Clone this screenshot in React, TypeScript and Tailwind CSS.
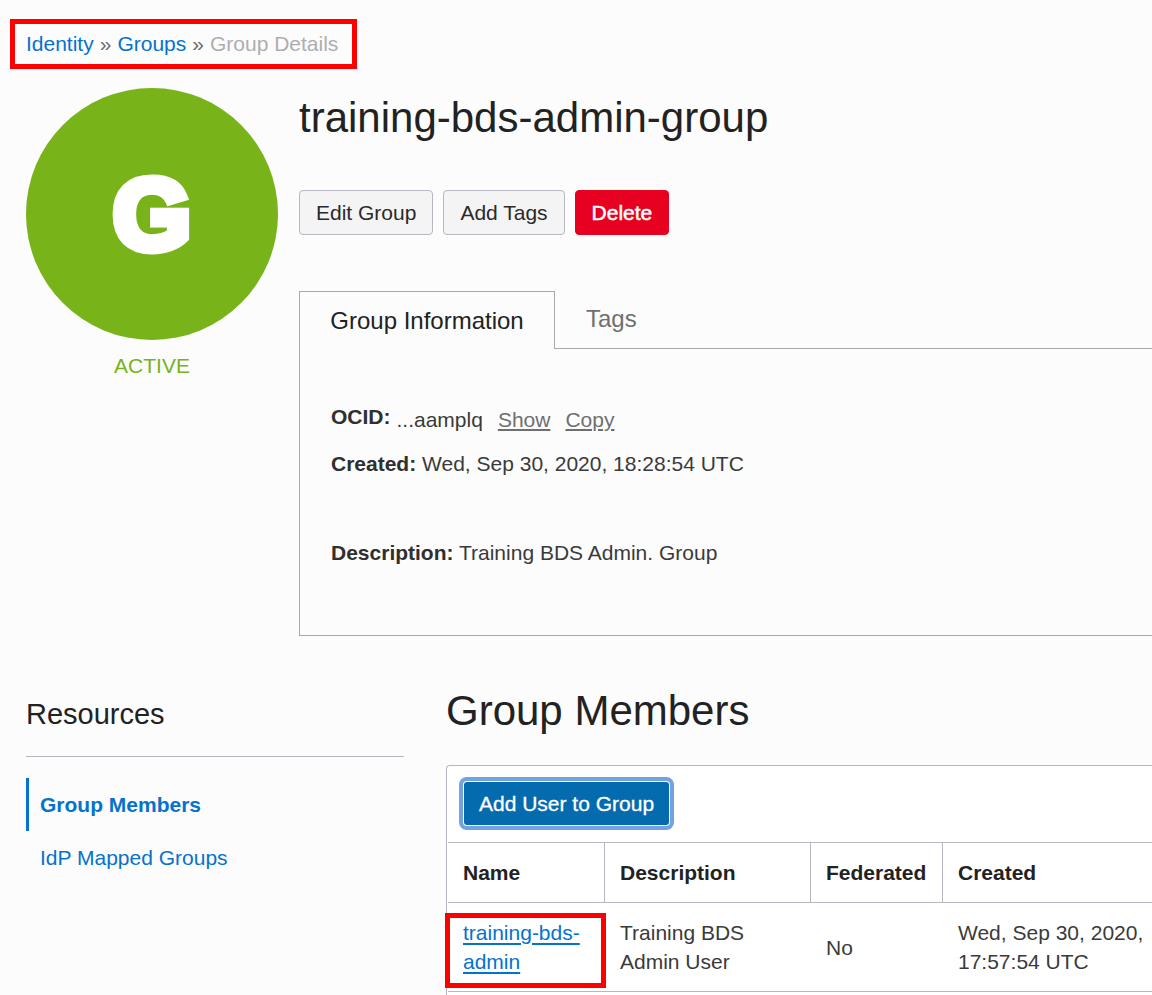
import React, { useState } from "react";

const members = [
  {
    name: "training-bds-admin",
    description: "Training BDS Admin User",
    federated: "No",
    created: "Wed, Sep 30, 2020, 17:57:54 UTC",
  },
];

const resources = ["Group Members", "IdP Mapped Groups"];

function Breadcrumb() {
  return (
    <nav
      aria-label="Breadcrumb"
      className="ml-[10px] flex h-[50px] w-fit items-center gap-[6px] whitespace-nowrap border-[5px] border-[#ff0000] pr-[14px] pl-[11px]"
    >
      <a href="#identity" className="text-[#0572ce]">Identity</a>
      <span className="text-[#6b6b6b]">»</span>
      <a href="#groups" className="text-[#0572ce]">Groups</a>
      <span className="text-[#6b6b6b]">»</span>
      <span className="text-[#aeaeae]">Group Details</span>
    </nav>
  );
}

function StatusBadge() {
  return (
    <div className="flex w-[252px] shrink-0 flex-col items-center">
      <div className="flex size-[252px] items-center justify-center rounded-full bg-[#77b319]">
        <span className="text-[100px] leading-none font-bold text-white [-webkit-text-stroke:9px_white]">
          G
        </span>
      </div>
      <p className="mt-[11px] leading-[30px] text-[#77b319]">ACTIVE</p>
    </div>
  );
}

function InfoPanel() {
  return (
    <div
      role="tabpanel"
      aria-labelledby="tab-info"
      className="border-b border-l border-[#a8a9aa] pt-[53px] pb-[67px] pl-[31px] leading-[30px]"
    >
      <div className="flex h-[33px]">
        <span className="self-start font-bold text-[#2f2f2f]">OCID:</span>
        <span className="ml-[6px] self-end">...aamplq</span>
        <button type="button" className="ml-[15px] self-end text-[#6f6f6f] underline decoration-2 underline-offset-2">
          Show
        </button>
        <button type="button" className="ml-[15px] self-end text-[#6f6f6f] underline decoration-2 underline-offset-2">
          Copy
        </button>
      </div>
      <p className="mt-[14px]">
        <strong className="text-[#2f2f2f]">Created:</strong> Wed, Sep 30, 2020, 18:28:54 UTC
      </p>
      <p className="mt-[59px]">
        <strong className="text-[#2f2f2f]">Description:</strong> Training BDS Admin. Group
      </p>
    </div>
  );
}

function GroupSummary() {
  const secondary =
    "h-[45px] rounded border border-[#b3b8c1] bg-[#f4f4f4] px-4 text-[#2a2a2a]";
  return (
    <section className="min-w-0 flex-1">
      <h1 className="mt-1 text-[42px] leading-[52px] text-[#222222]">training-bds-admin-group</h1>
      <div className="mt-[46px] flex gap-[10px]">
        <button type="button" className={secondary}>Edit Group</button>
        <button type="button" className={secondary}>Add Tags</button>
        <button
          type="button"
          className="h-[45px] rounded border border-[#e80020] bg-[#e80020] px-4 text-white [-webkit-text-stroke:0.5px_white]"
        >
          Delete
        </button>
      </div>
      <div role="tablist" className="mt-14 flex h-[58px] text-[24px]">
        <button
          type="button"
          role="tab"
          id="tab-info"
          aria-selected="true"
          className="w-[256px] border border-b-0 border-[#a8a9aa] text-[#222222]"
        >
          Group Information
        </button>
        <div className="flex flex-1 border-b border-[#a8a9aa]">
          <button type="button" role="tab" aria-selected="false" className="px-[31px] pb-[2px] text-[#6f6f6f]">
            Tags
          </button>
        </div>
      </div>
      <InfoPanel />
    </section>
  );
}

function ResourcesNav() {
  const [active, setActive] = useState(resources[0]);
  return (
    <aside className="w-[378px] shrink-0">
      <h2 className="border-b border-[#b3b8c1] pb-[13px] text-[29px] leading-[58px] text-[#222222]">
        Resources
      </h2>
      <ul className="mt-[21px]">
        {resources.map((item) => (
          <li key={item}>
            <a
              href="#resources"
              onClick={() => setActive(item)}
              className={
                item === active
                  ? "block border-l-[3px] border-[#0572ce] pl-[11px] leading-[53px] font-bold text-[#0572ce]"
                  : "block border-l-[3px] border-transparent pl-[11px] leading-[53px] text-[#0572ce]"
              }
            >
              {item}
            </a>
          </li>
        ))}
      </ul>
    </aside>
  );
}

function MembersTable() {
  const head = "h-[60px] border-b border-[#b3b8c1] px-[15px] text-left font-bold text-[#222222]";
  const cell = "border-b border-[#b3b8c1] px-[15px] py-[15px]";
  return (
    <table className="w-full table-fixed border-separate border-spacing-0 border-t border-[#b3b8c1]">
      <colgroup>
        <col className="w-[157px]" />
        <col className="w-[206px]" />
        <col className="w-[132px]" />
        <col />
      </colgroup>
      <thead>
        <tr>
          <th scope="col" className={head + " border-r"}>Name</th>
          <th scope="col" className={head + " border-r"}>Description</th>
          <th scope="col" className={head + " border-r"}>Federated</th>
          <th scope="col" className={head}>Created</th>
        </tr>
      </thead>
      <tbody className="leading-[29px]">
        {members.map((m) => (
          <tr key={m.name}>
            <td className={cell + " relative"}>
              <a href="#member" className="text-[#0572ce] underline decoration-2 underline-offset-3">
                {m.name}
              </a>
              <span className="pointer-events-none absolute top-[10px] -right-px bottom-[3px] -left-[3px] border-[5px] border-[#ff0000]" />
            </td>
            <td className={cell}>{m.description}</td>
            <td className={cell}>{m.federated}</td>
            <td className="border-b border-[#b3b8c1] py-[15px] pl-[15px]">{m.created}</td>
          </tr>
        ))}
      </tbody>
    </table>
  );
}

function GroupMembers() {
  return (
    <section className="min-w-0 flex-1">
      <h2 className="text-[42px] leading-[52px] text-[#222222]">Group Members</h2>
      <div className="mt-7 rounded-tl border-t border-l border-[#b3b8c1] bg-white pb-[3px] pl-px">
        <div className="px-4 pt-4 pb-[17px]">
          <button
            type="button"
            className="block h-[43px] rounded-[3px] bg-[#046bae] px-[15px] text-white shadow-[0_0_0_1px_white,0_0_0_5px_#72a3e0] [-webkit-text-stroke:0.3px_white]"
          >
            Add User to Group
          </button>
        </div>
        <MembersTable />
      </div>
    </section>
  );
}

export default function App() {
  return (
    <div className="min-h-screen bg-[#fcfcfc] pt-[19px] font-['Liberation_Sans',Arial,sans-serif] text-[21px] text-[#3a3a3a]">
      <Breadcrumb />
      <main className="mt-[19px] pl-[26px]">
        <div className="flex gap-[21px]">
          <StatusBadge />
          <GroupSummary />
        </div>
        <div className="mt-[49px] flex gap-[42px]">
          <ResourcesNav />
          <GroupMembers />
        </div>
      </main>
    </div>
  );
}
